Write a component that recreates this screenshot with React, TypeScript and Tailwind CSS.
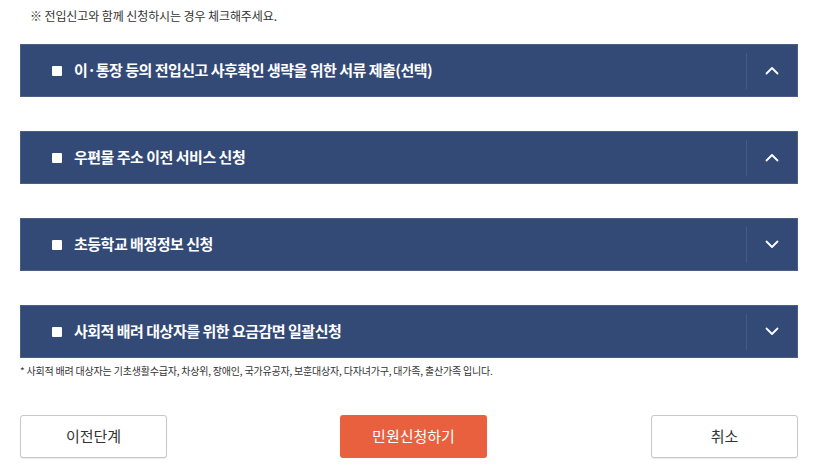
import React from "react";

const sections = [
  { title: "이·통장 등의 전입신고 사후확인 생략을 위한 서류 제출(선택)", open: true },
  { title: "우편물 주소 이전 서비스 신청", open: true },
  { title: "초등학교 배정정보 신청", open: false },
  { title: "사회적 배려 대상자를 위한 요금감면 일괄신청", open: false },
];

function Chevron({ up }: { up: boolean }) {
  return (
    <svg width="14" height="9" viewBox="0 0 14 9" fill="none">
      <path
        d={up ? "M1.5 7.5 7 2l5.5 5.5" : "M1.5 1.5 7 7l5.5-5.5"}
        stroke="white"
        strokeWidth="1.8"
        strokeLinecap="round"
        strokeLinejoin="round"
      />
    </svg>
  );
}

function SectionBar({ title, open }: { title: string; open: boolean }) {
  return (
    <div className="flex h-[53px] items-center border border-[#4a5e86] bg-[#344a76]">
      <div className="flex flex-1 items-center pl-[31px]">
        <span className="h-[10px] w-[10px] rounded-[1px] bg-white" />
        <span className="ml-[12px] text-[15px] font-bold tracking-[-0.5px] text-white">{title}</span>
      </div>
      <div className="h-[36px] w-px bg-[#46598a]" />
      <div className="flex w-[50px] items-center justify-center">
        <Chevron up={open} />
      </div>
    </div>
  );
}

export default function App() {
  return (
    <div
      className="h-[474px] w-[814px] bg-white pl-[20px] pr-[16px] text-[#333]"
      style={{ fontFamily: '"Noto Sans CJK KR", "Noto Sans", sans-serif' }}
    >
      <p className="pl-[10px] pt-[7px] text-[12px] leading-[18px] tracking-[-0.1px] text-[#333]">
        ※ 전입신고와 함께 신청하시는 경우 체크해주세요.
      </p>
      <div className="mt-[19px] flex flex-col gap-[34px]">
        {sections.map((s) => (
          <SectionBar key={s.title} title={s.title} open={s.open} />
        ))}
      </div>
      <p className="mt-[6px] text-[10px] leading-[14px] tracking-[-0.2px] text-[#333]">
        * 사회적 배려 대상자는 기초생활수급자, 차상위, 장애인, 국가유공자, 보훈대상자, 다자녀가구, 대가족, 출산가족 입니다.
      </p>
      <div className="mt-[37px] flex items-center">
        <button className="h-[43px] w-[147px] rounded-[3px] border border-[#c8c8c8] bg-white text-[15px] text-[#333] shadow-[0_1px_1px_rgba(0,0,0,0.08)]">
          이전단계
        </button>
        <button className="ml-[173px] h-[43px] w-[147px] rounded-[3px] bg-[#e9603f] text-[15px] text-white">
          민원신청하기
        </button>
        <button className="ml-auto h-[43px] w-[147px] rounded-[3px] border border-[#c8c8c8] bg-white text-[15px] text-[#333] shadow-[0_1px_1px_rgba(0,0,0,0.08)]">
          취소
        </button>
      </div>
    </div>
  );
}
